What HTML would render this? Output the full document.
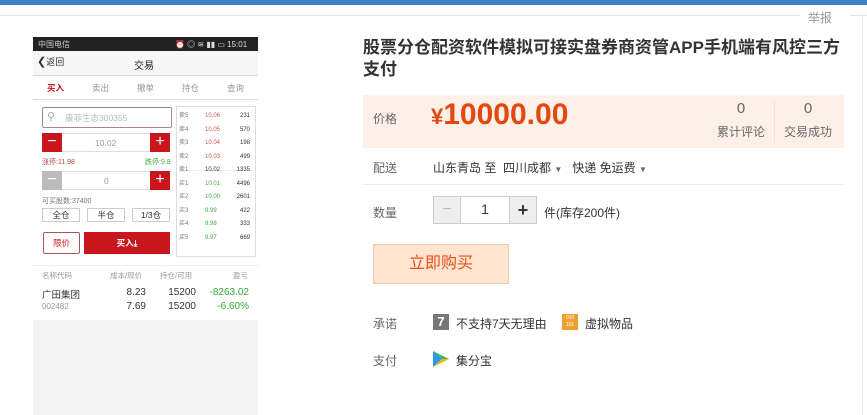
<!DOCTYPE html>
<html><head><meta charset="utf-8"><style>
*{margin:0;padding:0;box-sizing:border-box}
body{width:867px;height:415px;overflow:hidden;background:#fff;font-family:"Liberation Sans","Noto Sans CJK SC",sans-serif;position:relative;color:#333}
.a{position:absolute;white-space:nowrap}
.ph{font-size:8.5px}
</style></head><body>
<div class="a" style="left:0;top:0;width:867px;height:5px;background:#3f7ec8"></div>
<div class="a" style="left:0;top:15px;width:800px;height:1px;background:#e3e3e3"></div>
<div class="a" style="left:850px;top:15px;width:17px;height:1px;background:#e3e3e3"></div>
<div class="a" style="left:862px;top:16px;width:1px;height:399px;background:#e8e8e8"></div>
<div class="a" style="left:808px;top:9px;font-size:12px;color:#999">举报</div>

<!-- phone -->
<div class="a" style="left:33px;top:37px;width:225px;height:378px;background:#f4f4f4"></div>
<div class="a" style="left:33px;top:37px;width:225px;height:14px;background:#222"></div>
<div class="a ph" style="left:38px;top:39px;color:#ccc;font-size:8px">中国电信</div>
<div class="a ph" style="left:175px;top:39px;color:#ddd;font-size:8px">⏰ ◎ ≋ ▮▮ ▭ 15:01</div>
<div class="a" style="left:33px;top:51px;width:225px;height:25px;background:#f7f7f7;border-bottom:1px solid #ddd"></div>
<div class="a" style="left:37px;top:55px;font-size:11px;color:#333">❮<span style="font-size:9px">返回</span></div>
<div class="a" style="left:134px;top:57px;font-size:10px;color:#222">交易</div>
<div class="a" style="left:33px;top:76px;width:225px;height:24px;background:#fff;border-bottom:1px solid #ddd"></div>
<div class="a ph" style="left:47px;top:82px;color:#c8161d;font-weight:bold">买入</div>
<div class="a ph" style="left:92px;top:82px;color:#999">卖出</div>
<div class="a ph" style="left:137px;top:82px;color:#999">撤单</div>
<div class="a ph" style="left:182px;top:82px;color:#999">持仓</div>
<div class="a ph" style="left:227px;top:82px;color:#999">查询</div>
<div class="a" style="left:33px;top:100px;width:225px;height:165px;background:#fff"></div>
<div class="a" style="left:42px;top:107px;width:130px;height:21px;border:1px solid #a88;border-radius:2px;background:#fff"></div>
<div class="a ph" style="left:47px;top:110px;color:#aaa;font-size:11px">⚲</div>
<div class="a ph" style="left:65px;top:112px;color:#bbb">康菲生态300355</div>
<div class="a" style="left:42px;top:133px;width:128px;height:19px;border:1px solid #ddd"></div>
<div class="a" style="left:42px;top:133px;width:20px;height:19px;background:#c8161d;color:#fff;font-size:16px;line-height:17px;text-align:center">−</div>
<div class="a" style="left:150px;top:133px;width:20px;height:19px;background:#c8161d;color:#fff;font-size:16px;line-height:18px;text-align:center">+</div>
<div class="a ph" style="left:95px;top:138px;color:#999">10.02</div>
<div class="a" style="left:42px;top:157px;font-size:7px;color:#b44">涨停:11.98</div>
<div class="a" style="left:145px;top:157px;font-size:7px;color:#4a4">跌停:9.8</div>
<div class="a" style="left:42px;top:171px;width:128px;height:19px;border:1px solid #ddd"></div>
<div class="a" style="left:42px;top:171px;width:20px;height:19px;background:#bbb;color:#fff;font-size:16px;line-height:17px;text-align:center">−</div>
<div class="a" style="left:150px;top:171px;width:20px;height:19px;background:#c8161d;color:#fff;font-size:16px;line-height:18px;text-align:center">+</div>
<div class="a ph" style="left:104px;top:176px;color:#999">0</div>
<div class="a" style="left:42px;top:196px;font-size:7px;color:#777">可买股数:37400</div>
<div class="a ph" style="left:42px;top:208px;width:38px;height:14px;border:1px solid #ccc;text-align:center;line-height:12px">全仓</div>
<div class="a ph" style="left:87px;top:208px;width:38px;height:14px;border:1px solid #ccc;text-align:center;line-height:12px">半仓</div>
<div class="a ph" style="left:132px;top:208px;width:38px;height:14px;border:1px solid #ccc;text-align:center;line-height:12px">1/3仓</div>
<div class="a ph" style="left:43px;top:232px;width:37px;height:22px;border:1px solid #a55;border-radius:2px;color:#c8161d;text-align:center;line-height:20px">限价</div>
<div class="a ph" style="left:84px;top:232px;width:86px;height:22px;background:#c8161d;color:#fff;font-weight:bold;text-align:center;line-height:22px">买入⤓</div>
<div class="a" style="left:176px;top:106px;width:80px;height:151px;border:1px solid #ddd"></div>
<div class="a" style="left:178px;top:170px;width:76px;height:1px;background:#eee"></div>
<div class="a" style="left:179px;top:110px;font-size:6px;line-height:13.5px;color:#777">卖5<br>卖4<br>卖3<br>卖2<br>卖1<br>买1<br>买2<br>买3<br>买4<br>买5</div>
<div class="a" style="left:205px;top:110px;font-size:6px;line-height:13.5px;color:#c55">10.06<br>10.05<br>10.04<br>10.03<br><span style="color:#333">10.02</span><br><span style="color:#4a4">10.01<br>10.00<br>9.99<br>9.98<br>9.97</span></div>
<div class="a" style="left:226px;top:110px;width:24px;text-align:right;font-size:6px;line-height:13.5px;color:#333">231<br>570<br>198<br>499<br>1335<br>4496<br>2601<br>422<br>333<br>669</div>
<div class="a" style="left:33px;top:265px;width:225px;height:55px;background:#fff;border-top:1px solid #eee"></div>
<div class="a" style="left:42px;top:270px;font-size:7.5px;color:#999">名称代码</div>
<div class="a" style="left:110px;top:270px;font-size:7.5px;color:#999">成本/现价</div>
<div class="a" style="left:160px;top:270px;font-size:7.5px;color:#999">持仓/可用</div>
<div class="a" style="left:233px;top:270px;font-size:7.5px;color:#999">盈亏</div>
<div class="a" style="left:42px;top:287px;font-size:9.5px;color:#333">广田集团</div>
<div class="a" style="left:42px;top:302px;font-size:8px;color:#999">002482</div>
<div class="a" style="left:110px;top:286px;width:36px;text-align:right;font-size:10px;line-height:14px">8.23<br>7.69</div>
<div class="a" style="left:160px;top:286px;width:36px;text-align:right;font-size:10px;line-height:14px">15200<br>15200</div>
<div class="a" style="left:200px;top:286px;width:49px;text-align:right;font-size:10px;line-height:14px;color:#3a3">-8263.02<br>-6.60%</div>

<!-- right -->
<div class="a" style="left:363px;top:37px;font-size:17px;font-weight:bold;color:#333;line-height:22px">股票分仓配资软件模拟可接实盘券商资管APP手机端有风控三方<br>支付</div>
<div class="a" style="left:363px;top:95px;width:481px;height:53px;background:#fdf0e8"></div>
<div class="a" style="left:774px;top:100px;width:1px;height:43px;background:#f5e2d6"></div>
<div class="a" style="left:373px;top:110px;font-size:12px;color:#666">价格</div>
<div class="a" style="left:431px;top:98px;font-size:30px;font-weight:bold;color:#e4480e"><span style="font-size:22px">¥</span>10000.00</div>
<div class="a" style="left:717px;top:100px;width:48px;text-align:center;font-size:15px;color:#666">0</div>
<div class="a" style="left:717px;top:123px;width:48px;text-align:center;font-size:12px;color:#666">累计评论</div>
<div class="a" style="left:783px;top:100px;width:50px;text-align:center;font-size:15px;color:#666">0</div>
<div class="a" style="left:783px;top:123px;width:50px;text-align:center;font-size:12px;color:#666">交易成功</div>
<div class="a" style="left:373px;top:159px;font-size:12px;color:#666">配送</div>
<div class="a" style="left:433px;top:159px;font-size:12px;color:#333">山东青岛 至 &nbsp;四川成都 <span style="font-size:8px;color:#666">▼</span> &nbsp;&nbsp;快递 免运费 <span style="font-size:8px;color:#666">▼</span></div>
<div class="a" style="left:363px;top:184px;width:481px;border-top:1px dotted #ddd"></div>
<div class="a" style="left:373px;top:204px;font-size:12px;color:#666">数量</div>
<div class="a" style="left:433px;top:196px;width:104px;height:28px;border:1px solid #ccc;background:#fff"></div>
<div class="a" style="left:434px;top:197px;width:26px;height:26px;background:#eee;color:#bbb;text-align:center;line-height:26px;font-size:16px">−</div>
<div class="a" style="left:460px;top:197px;width:1px;height:26px;background:#ccc"></div>
<div class="a" style="left:509px;top:197px;width:1px;height:26px;background:#ccc"></div>
<div class="a" style="left:510px;top:197px;width:26px;height:26px;background:#eee;color:#333;text-align:center;line-height:26px;font-size:18px;font-weight:bold">+</div>
<div class="a" style="left:461px;top:201px;width:48px;text-align:center;font-size:14px">1</div>
<div class="a" style="left:544px;top:204px;font-size:12px;color:#333">件(库存200件)</div>
<div class="a" style="left:373px;top:244px;width:136px;height:40px;background:#ffe4d0;border:1px solid #f3c9ad;color:#e5511d;font-size:16px;text-align:center;line-height:38px">立即购买</div>
<div class="a" style="left:373px;top:315px;font-size:12px;color:#666">承诺</div>
<div class="a" style="left:433px;top:314px;width:16px;height:16px;background:#777;color:#fff;font-weight:bold;font-size:13px;text-align:center;line-height:16px">7</div>
<div class="a" style="left:456px;top:315px;font-size:12px;color:#333">不支持7天无理由</div>
<div class="a" style="left:562px;top:314px;width:16px;height:16px;background:#f0a030;color:#fff;font-size:5px;line-height:7px;text-align:center;padding-top:1px">010<br>101</div>
<div class="a" style="left:585px;top:315px;font-size:12px;color:#333">虚拟物品</div>
<div class="a" style="left:373px;top:352px;font-size:12px;color:#666">支付</div>
<svg class="a" style="left:433px;top:351px" width="16" height="16" viewBox="0 0 16 16"><polygon points="0,0 9,8 0,16" fill="#2a9be8"/><polygon points="0,0 16,8 9,8" fill="#3cba54"/><polygon points="9,8 16,8 0,16" fill="#f4b400"/></svg>
<div class="a" style="left:456px;top:352px;font-size:12px;color:#333">集分宝</div>
</body></html>
